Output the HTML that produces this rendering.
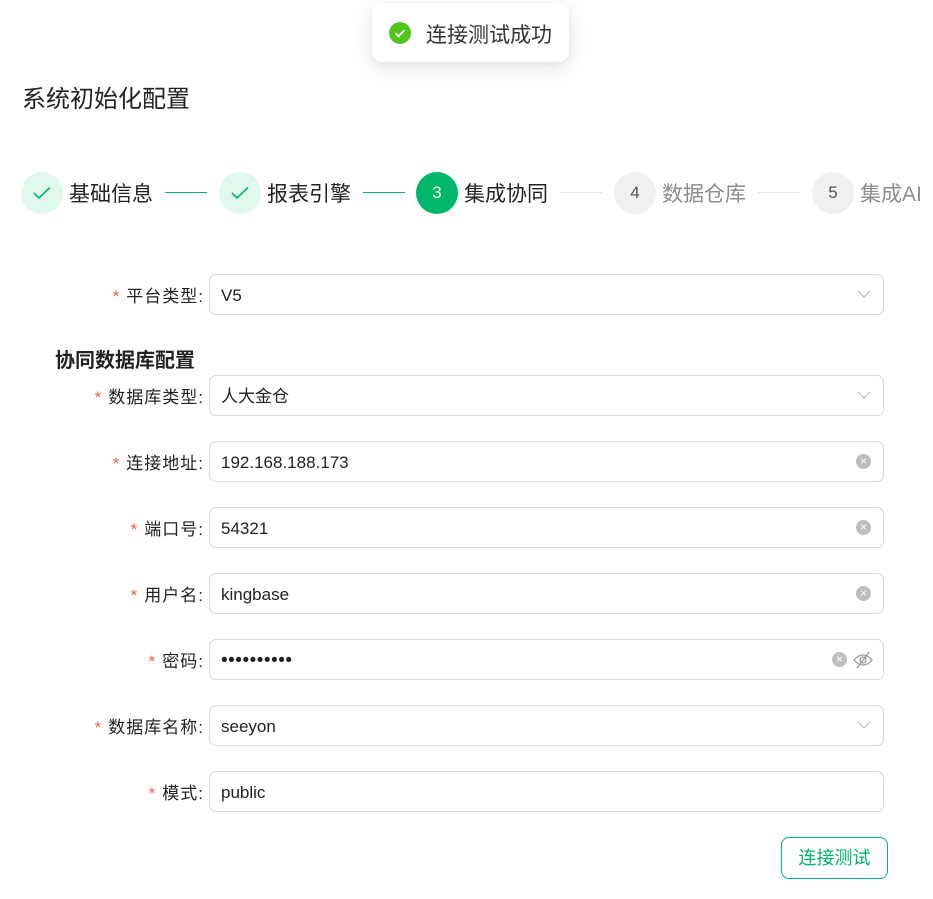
<!DOCTYPE html>
<html><head><meta charset="utf-8"><style>
*{box-sizing:border-box;margin:0;padding:0}
body{width:933px;height:899px;background:#fff;font-family:"Liberation Sans","Noto Sans CJK SC",sans-serif;color:#222;position:relative;overflow:hidden}
.abs{position:absolute}
.toast{left:372px;top:3px;width:197px;height:59px;border-radius:10px;background:#fff;box-shadow:0 6px 24px rgba(0,0,0,.1),0 2px 6px rgba(0,0,0,.05)}
.title{left:22px;top:79px;font-size:24px;color:#222}
.c{width:42px;height:42px;border-radius:50%;top:172px;display:flex;align-items:center;justify-content:center;font-size:17px}
.done{background:#e1f8ec}
.act{background:#00b66b;color:#fff}
.todo{background:#f0f0f0;color:#555}
.sl{top:180px;font-size:21px;line-height:30px}
.ln{top:192px;height:1px;width:42px}
.lab{width:204px;left:0;text-align:right;font-size:17px;letter-spacing:1px;padding-right:0;color:#222}
.lab b{color:#f5603c;font-weight:normal;margin-right:6px}
.inp{left:209px;width:675px;height:41px;border:1px solid #d9d9d9;border-radius:7px;font-size:17px;padding-left:11px;line-height:41px;color:#222}
.x{position:absolute;top:12px;width:15px;height:15px;border-radius:50%;background:#bdbdbd;color:#fff;font-size:12px;line-height:15px;text-align:center}
</style></head><body>
<div class="abs toast">
<svg class="abs" style="left:17px;top:19px" width="22" height="22" viewBox="0 0 22 22"><circle cx="11" cy="11" r="11" fill="#52c41a"/><path d="M6.5 11.3l3 3 6-6" stroke="#fff" stroke-width="1.8" fill="none"/></svg>
<div class="abs" style="left:54px;top:16px;font-size:21px;color:#333">连接测试成功</div>
</div>
<div class="abs title">系统初始化配置</div>

<div class="abs c done" style="left:21px"><svg width="18" height="14"><path d="M1 7l5 5L17 1.5" stroke="#00b66b" stroke-width="1.6" fill="none"/></svg></div>
<div class="abs sl" style="left:69px">基础信息</div>
<div class="abs ln" style="left:165px;background:#00b66b"></div>
<div class="abs c done" style="left:219px"><svg width="18" height="14"><path d="M1 7l5 5L17 1.5" stroke="#00b66b" stroke-width="1.6" fill="none"/></svg></div>
<div class="abs sl" style="left:267px">报表引擎</div>
<div class="abs ln" style="left:363px;background:#00b66b"></div>
<div class="abs c act" style="left:416px">3</div>
<div class="abs sl" style="left:464px">集成协同</div>
<div class="abs ln" style="left:560px;background:#e6e6e6"></div>
<div class="abs c todo" style="left:614px">4</div>
<div class="abs sl" style="left:662px;color:#8c8c8c">数据仓库</div>
<div class="abs ln" style="left:758px;background:#e6e6e6"></div>
<div class="abs c todo" style="left:812px">5</div>
<div class="abs sl" style="left:860px;color:#8c8c8c">集成AI</div>

<div class="abs lab" style="top:282px"><b>*</b>平台类型:</div>
<div class="abs inp" style="top:274px">V5<svg class="abs" style="right:12px;top:15px" width="14" height="9"><path d="M1 1l6 6 6-6" stroke="#bbb" stroke-width="1.2" fill="none"/></svg></div>
<div class="abs" style="left:55px;top:344px;font-size:20px;font-weight:bold;color:#222">协同数据库配置</div>

<div class="abs lab" style="top:383px"><b>*</b>数据库类型:</div>
<div class="abs inp" style="top:375px">人大金仓<svg class="abs" style="right:12px;top:15px" width="14" height="9"><path d="M1 1l6 6 6-6" stroke="#bbb" stroke-width="1.2" fill="none"/></svg></div>
<div class="abs lab" style="top:449px"><b>*</b>连接地址:</div>
<div class="abs inp" style="top:441px">192.168.188.173<span class="x" style="right:12px">×</span></div>
<div class="abs lab" style="top:515px"><b>*</b>端口号:</div>
<div class="abs inp" style="top:507px">54321<span class="x" style="right:12px">×</span></div>
<div class="abs lab" style="top:581px"><b>*</b>用户名:</div>
<div class="abs inp" style="top:573px">kingbase<span class="x" style="right:12px">×</span></div>
<div class="abs lab" style="top:647px"><b>*</b>密码:</div>
<div class="abs inp" style="top:639px;letter-spacing:0.5px;font-size:19px">••••••••••<span class="x" style="right:36px;letter-spacing:0;font-size:12px">×</span><svg class="abs" style="right:10px;top:11px" width="20" height="18" viewBox="0 0 20 18"><path d="M1 9q9-10 18 0q-9 10-18 0z" stroke="#999" stroke-width="1.3" fill="none"/><circle cx="10" cy="9" r="3" stroke="#999" stroke-width="1.3" fill="none"/><path d="M4 17L16 1" stroke="#999" stroke-width="1.3"/></svg></div>
<div class="abs lab" style="top:713px"><b>*</b>数据库名称:</div>
<div class="abs inp" style="top:705px">seeyon<svg class="abs" style="right:12px;top:15px" width="14" height="9"><path d="M1 1l6 6 6-6" stroke="#bbb" stroke-width="1.2" fill="none"/></svg></div>
<div class="abs lab" style="top:779px"><b>*</b>模式:</div>
<div class="abs inp" style="top:771px">public</div>

<div class="abs" style="left:781px;top:837px;width:107px;height:42px;border:1px solid #00b66b;border-radius:8px;color:#00b66b;font-size:18px;text-align:center;line-height:40px">连接测试</div>
</body></html>
